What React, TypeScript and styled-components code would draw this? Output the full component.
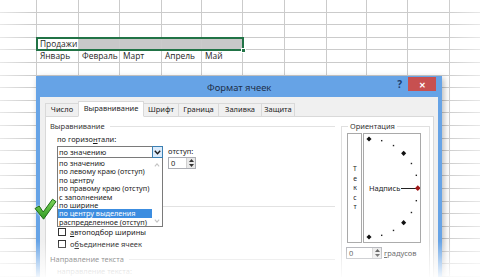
import React from "react";
import styled, { createGlobalStyle } from "styled-components";

const GlobalStyle = createGlobalStyle`
  html, body {
    margin: 0;
    padding: 0;
    background: #fff;
  }
  body {
    font-family: "Noto Sans", "Open Sans", sans-serif;
  }
  * {
    box-sizing: border-box;
  }
`;

const Stage = styled.div`
  position: relative;
  width: 480px;
  height: 277px;
  overflow: hidden;
  background: #fff;
`;

/* ---------- spreadsheet ---------- */

const Sheet = styled.div`
  display: grid;
  grid-template-columns: 37px 42px 41px 42px 40px 41px 42px 42px 40px 41px 42px 41px;
  grid-template-rows: repeat(22, 12.6px);
  font-family: "Open Sans", "Noto Sans", sans-serif;
  font-size: 8.4px;
  color: #262626;
`;

const Cell = styled.div<{ $shade?: boolean }>`
  border-style: solid;
  border-color: #cbcbcb;
  border-width: 0 1px 1px 0;
  background-color: ${(p) => (p.$shade ? "#c8c8c8" : "#ffffff")};
  padding-left: 3px;
  line-height: 11.6px;
  white-space: nowrap;
  overflow: hidden;
`;

const Selection = styled.div`
  grid-row: 4;
  grid-column: 2 / 7;
  margin: -1px;
  border: 2px solid #217346;
  position: relative;
  pointer-events: none;
`;

const FillHandle = styled.span`
  position: absolute;
  right: -4px;
  bottom: -4px;
  width: 5px;
  height: 5px;
  background: #217346;
  border: 1px solid #fff;
`;

const SideFade = styled.div<{ $side: "left" | "right" }>`
  position: absolute;
  top: 0;
  bottom: 0;
  width: 34px;
  ${(p) => p.$side}: 0;
  background: linear-gradient(
    to ${(p) => (p.$side === "left" ? "right" : "left")},
    rgba(255, 255, 255, 0.55),
    rgba(255, 255, 255, 0)
  );
`;

const BottomFade = styled.div`
  position: absolute;
  left: 0;
  right: 0;
  bottom: 0;
  height: 36px;
  background: linear-gradient(
    to bottom,
    rgba(255, 255, 255, 0),
    rgba(255, 255, 255, 0.9)
  );
`;

/* ---------- dialog window ---------- */

const Dialog = styled.div`
  position: absolute;
  left: 36px;
  top: 76px;
  width: 406px;
  height: 230px;
  background: #66a3e6;
  padding: 0 4px 4px;
  display: flex;
  flex-direction: column;
  box-shadow: 2px 2px 6px rgba(0, 0, 0, 0.28);
  font-family: "Noto Sans", "Open Sans", sans-serif;
  color: #1c1c1c;
`;

const TitleBar = styled.div`
  height: 21px;
  display: flex;
  align-items: center;
  padding-left: 167px;
`;

const Title = styled.div`
  flex: 1;
  font-size: 9.4px;
  color: #1d2f4a;
  padding-top: 1px;
  white-space: nowrap;
`;

const TitleButtons = styled.div`
  display: flex;
  align-self: flex-start;
  align-items: flex-start;
  gap: 6px;
  padding-right: 2px;
`;

const HelpButton = styled.span`
  font-size: 10px;
  font-weight: 700;
  color: #1c3d6e;
  line-height: 14px;
  margin-top: 1px;
`;

const CloseButton = styled.span`
  width: 28px;
  height: 14px;
  margin-top: 1px;
  background: #c75050;
  color: #fff;
  font-size: 8px;
  font-weight: 700;
  display: flex;
  align-items: center;
  justify-content: center;
`;

const Body = styled.div`
  flex: 1;
  background: #f0f0f0;
  padding: 2px 4px 0 5px;
  display: flex;
  flex-direction: column;
`;

const Tabs = styled.div`
  display: flex;
  align-items: flex-end;
  height: 17px;
  position: relative;
  z-index: 1;
`;

const Tab = styled.div<{ $active?: boolean; $w: number }>`
  width: ${(p) => p.$w}px;
  height: ${(p) => (p.$active ? "16px" : "13px")};
  margin-right: -1px;
  border: 1px solid #d9d9d9;
  border-bottom: ${(p) => (p.$active ? "1px solid #fff" : "none")};
  margin-bottom: ${(p) => (p.$active ? "-1px" : "0")};
  background: ${(p) => (p.$active ? "#fff" : "#f0f0f0")};
  font-size: 7.5px;
  line-height: ${(p) => (p.$active ? "13px" : "11px")};
  text-align: center;
  white-space: nowrap;
  position: relative;
  z-index: ${(p) => (p.$active ? 2 : 1)};
`;

const Panel = styled.div`
  flex: 1;
  background: #fff;
  border: 1px solid #d9d9d9;
  display: flex;
  align-items: flex-start;
  font-size: 7.5px;
`;

const LeftCol = styled.div`
  width: 289px;
  padding-left: 4px;
  padding-top: 3px;
  display: flex;
  flex-direction: column;
`;

const GroupHeader = styled.div`
  height: 12px;
  display: flex;
  align-items: center;
  color: #333;
  white-space: nowrap;

  &::after {
    content: "";
    flex: 1;
    height: 1px;
    background: #e2e2e2;
    margin-left: 5px;
  }
`;

const Divider = styled.div`
  height: 1px;
  background: #e2e2e2;
`;

const Indented = styled.div`
  padding-left: 7px;
  display: flex;
  flex-direction: column;
`;

const AlignGrid = styled.div`
  display: grid;
  grid-template-columns: 106px auto;
  grid-template-rows: 13px 13px 12px;
  column-gap: 5px;
  align-items: center;
`;

const Label = styled.div<{ $faded?: boolean }>`
  height: 12px;
  line-height: 12px;
  white-space: nowrap;
  color: ${(p) => (p.$faded ? "#9a9a9a" : "#1c1c1c")};
`;

const SmallLabel = styled(Label)`
  height: 11px;
  line-height: 10px;
`;

const Key = styled.span`
  text-decoration: underline;
  text-underline-offset: 1px;
`;

const SelectWrap = styled.div`
  position: relative;
  height: 12px;
  align-self: start;
  margin-top: 1px;
`;

const SelectBox = styled.div`
  height: 12px;
  border: 1px solid #7a7a7a;
  background: #fff;
  display: flex;
  align-items: stretch;
  line-height: 10px;
`;

const SelectText = styled.span`
  flex: 1;
  padding-left: 1px;
  white-space: nowrap;
  overflow: hidden;
`;

const SelectArrow = styled.span`
  width: 11px;
  margin: -1px -1px -1px 0;
  border: 1px solid #3c7fb1;
  background: #dcecfc;
  display: flex;
  align-items: center;
  justify-content: center;
`;

const DropList = styled.div`
  position: absolute;
  left: 0;
  top: 12px;
  width: 106px;
  height: 69px;
  background: #fff;
  border: 1px solid #7a7a7a;
  border-top: none;
  padding-top: 1px;
  display: flex;
  z-index: 5;
`;

const Options = styled.div`
  flex: 1;
  display: flex;
  flex-direction: column;
`;

const Option = styled.div<{ $selected?: boolean }>`
  height: 8.4px;
  line-height: 8.4px;
  font-size: 7.3px;
  padding-left: 1px;
  white-space: nowrap;
  overflow: hidden;
  background: ${(p) => (p.$selected ? "#3c8de0" : "transparent")};
  color: ${(p) => (p.$selected ? "#fff" : "#1c1c1c")};
`;

const ScrollTrack = styled.div`
  width: 10px;
  display: flex;
  flex-direction: column;
  justify-content: space-between;
  align-items: center;
  padding: 4px 0 3px;
`;

const IndentCol = styled.div`
  grid-row: 2 / span 2;
  grid-column: 2;
  align-self: start;
  margin-top: 1px;
  display: flex;
  flex-direction: column;
`;

const Spinner = styled.div<{ $w: number }>`
  width: ${(p) => p.$w}px;
  height: 12px;
  border: 1px solid #abadb3;
  background: #fff;
  display: flex;
  align-items: stretch;
  line-height: 10px;
`;

const SpinValue = styled.span`
  flex: 1;
  padding-left: 2px;
`;

const SpinButtons = styled.span`
  width: 9px;
  display: flex;
  flex-direction: column;
  background: #e9e9e9;
  border-left: 1px solid #d0d0d0;
`;

const SpinHalf = styled.span`
  flex: 1;
  display: flex;
  align-items: center;
  justify-content: center;
`;

const CheckRow = styled.div`
  height: 12px;
  display: flex;
  align-items: center;
  white-space: nowrap;
`;

const CheckBox = styled.span`
  width: 8px;
  height: 8px;
  border: 1px solid #333;
  background: #fff;
  margin: 0 4px 0 1px;
`;

const Gap = styled.div<{ $h: number }>`
  height: ${(p) => p.$h}px;
  flex: none;
`;

/* ---------- orientation ---------- */

const Orientation = styled.fieldset`
  margin: 3px 0 0 6px;
  padding: 1px 8px 0 5px;
  width: 89px;
  height: 160px;
  border: 1px solid #e0e0e0;
  border-bottom: none;
  display: flex;
  flex-direction: column;
  min-width: 0;

  legend {
    padding: 0 2px;
    margin-left: 1px;
    color: #333;
    line-height: 12px;
  }
`;

const DialRow = styled.div`
  display: flex;
  gap: 1px;
  height: 110px;
`;

const VerticalText = styled.div`
  width: 16px;
  border: 1px solid #a9a9a9;
  display: flex;
  align-items: center;
  justify-content: center;
  font-size: 6.8px;
  color: #222;

  span {
    writing-mode: vertical-rl;
    text-orientation: upright;
    letter-spacing: 0.6px;
    line-height: 8px;
  }
`;

const DialBox = styled.div`
  flex: 1;
  border: 1px solid #a9a9a9;
`;

const DegreesRow = styled.div`
  display: flex;
  align-items: center;
  gap: 2px;
  margin-top: 4px;
  margin-left: -1px;
`;

/* ---------- small drawings ---------- */

const Chevron = ({ up, color, size = 5 }: { up?: boolean; color: string; size?: number }) => (
  <svg width={size + 2} height={size} viewBox="0 0 7 5">
    <path
      d={up ? "M0.8 4.2 L3.5 1.2 L6.2 4.2" : "M0.8 0.8 L3.5 3.8 L6.2 0.8"}
      fill="none"
      stroke={color}
      strokeWidth="1.4"
    />
  </svg>
);

const Tri = ({ up }: { up?: boolean }) => (
  <svg width="5" height="3" viewBox="0 0 5 3">
    <path d={up ? "M0 3 L2.5 0 L5 3 Z" : "M0 0 L2.5 3 L5 0 Z"} fill="#333" />
  </svg>
);

const Dial = () => {
  const cx = 5;
  const cy = 54;
  const r = 49;
  const dots = [];
  for (let a = -90; a <= 90; a += 15) {
    if (a === 0) continue;
    const rad = (a * Math.PI) / 180;
    const x = cx + r * Math.cos(rad);
    const y = cy - r * Math.sin(rad);
    const big = Math.abs(a) === 90 || Math.abs(a) === 45;
    dots.push(
      big ? (
        <rect key={a} x={x - 1.8} y={y - 1.8} width="3.6" height="3.6" fill="#111" transform={`rotate(45 ${x} ${y})`} />
      ) : (
        <rect key={a} x={x - 0.7} y={y - 0.7} width="1.4" height="1.4" fill="#222" />
      )
    );
  }
  return (
    <svg width="56" height="108" viewBox="0 0 56 108" style={{ display: "block" }}>
      {dots}
      <text x="5" y="57" fontSize="7.5" fontFamily="Noto Sans, sans-serif" fill="#1c1c1c">
        Надпись
      </text>
      <line x1="37" y1="54.5" x2="52" y2="54.5" stroke="#222" strokeWidth="1" />
      <rect x="51.8" y="52.2" width="4" height="4" fill="#a01818" transform="rotate(45 53.8 54.2)" />
    </svg>
  );
};

const GreenCheck = styled.svg`
  position: absolute;
  left: 34px;
  top: 198px;
  filter: drop-shadow(0 0 1px rgba(255, 255, 255, 0.9));
`;

/* ---------- data ---------- */

const months = ["Январь", "Февраль", "Март", "Апрель", "Май"];

const options = [
  "по значению",
  "по левому краю (отступ)",
  "по центру",
  "по правому краю (отступ)",
  "с заполнением",
  "по ширине",
  "по центру выделения",
  "распределенное (отступ)",
];

const tabs: [string, number][] = [
  ["Число", 34],
  ["Выравнивание", 66],
  ["Шрифт", 36],
  ["Граница", 41],
  ["Заливка", 44],
  ["Защита", 34],
];

function renderSheet() {
  const cells = [];
  for (let r = 0; r < 22; r++) {
    for (let c = 0; c < 12; c++) {
      let text = "";
      let shade = false;
      if (r === 3 && c === 1) text = "Продажи";
      if (r === 3 && c >= 2 && c <= 5) shade = true;
      if (r === 4 && c >= 1 && c <= 5) text = months[c - 1];
      cells.push(
        <Cell key={`${r}-${c}`} $shade={shade} style={{ gridRow: r + 1, gridColumn: c + 1 }}>
          {text}
        </Cell>
      );
    }
  }
  return cells;
}

export default function App() {
  return (
    <Stage>
      <GlobalStyle />
      <Sheet>
        {renderSheet()}
        <Selection>
          <FillHandle />
        </Selection>
      </Sheet>
      <SideFade $side="left" />
      <SideFade $side="right" />

      <Dialog>
        <TitleBar>
          <Title>Формат ячеек</Title>
          <TitleButtons>
            <HelpButton>?</HelpButton>
            <CloseButton>✕</CloseButton>
          </TitleButtons>
        </TitleBar>
        <Body>
          <Tabs>
            {tabs.map(([t, w]) => (
              <Tab key={t} $w={w} $active={t === "Выравнивание"}>
                {t}
              </Tab>
            ))}
          </Tabs>
          <Panel>
            <LeftCol>
              <GroupHeader>Выравнивание</GroupHeader>
              <Indented>
                <AlignGrid>
                  <Label>
                    по горизо<Key>н</Key>тали:
                  </Label>
                  <div />
                  <SelectWrap>
                    <SelectBox>
                      <SelectText>по значению</SelectText>
                      <SelectArrow>
                        <Chevron color="#1c1c1c" />
                      </SelectArrow>
                    </SelectBox>
                    <DropList>
                      <Options>
                        {options.map((o) => (
                          <Option key={o} $selected={o === "по центру выделения"}>
                            {o}
                          </Option>
                        ))}
                      </Options>
                      <ScrollTrack>
                        <Chevron up color="#c4c4c4" size={4} />
                        <Chevron color="#c4c4c4" size={4} />
                      </ScrollTrack>
                    </DropList>
                  </SelectWrap>
                  <IndentCol>
                    <SmallLabel>отступ:</SmallLabel>
                    <Spinner $w={28}>
                      <SpinValue>0</SpinValue>
                      <SpinButtons>
                        <SpinHalf>
                          <Tri up />
                        </SpinHalf>
                        <SpinHalf>
                          <Tri />
                        </SpinHalf>
                      </SpinButtons>
                    </Spinner>
                  </IndentCol>
                </AlignGrid>
              </Indented>
              <Gap $h={36} />
              <Divider />
              <Gap $h={19} />
              <Indented>
                <CheckRow>
                  <CheckBox />
                  <Key>а</Key>втоподбор ширины
                </CheckRow>
                <CheckRow>
                  <CheckBox />о<Key>б</Key>ъединение ячеек
                </CheckRow>
              </Indented>
              <Gap $h={3} />
              <GroupHeader>Направление текста</GroupHeader>
              <Indented>
                <Label $faded>направление текста:</Label>
              </Indented>
            </LeftCol>

            <Orientation>
              <legend>Ориентация</legend>
              <DialRow>
                <VerticalText>
                  <span>Текст</span>
                </VerticalText>
                <DialBox>
                  <Dial />
                </DialBox>
              </DialRow>
              <DegreesRow>
                <Spinner $w={36}>
                  <SpinValue>0</SpinValue>
                  <SpinButtons>
                    <SpinHalf>
                      <Tri up />
                    </SpinHalf>
                    <SpinHalf>
                      <Tri />
                    </SpinHalf>
                  </SpinButtons>
                </Spinner>
                <Label>
                  <Key>г</Key>радусов
                </Label>
              </DegreesRow>
            </Orientation>
          </Panel>
        </Body>
      </Dialog>

      <GreenCheck width="23" height="23" viewBox="0 0 23 23">
        <defs>
          <linearGradient id="chk" x1="0" y1="0" x2="0" y2="1">
            <stop offset="0" stopColor="#7fd45a" />
            <stop offset="1" stopColor="#2f9b22" />
          </linearGradient>
        </defs>
        <path
          d="M1 10.5 L5.2 8 L9.2 14 L18.5 1.2 L22 3.6 L9.6 21.2 Z"
          fill="url(#chk)"
          stroke="#1e6b16"
          strokeWidth="1"
          strokeLinejoin="round"
        />
      </GreenCheck>

      <BottomFade />
    </Stage>
  );
}
